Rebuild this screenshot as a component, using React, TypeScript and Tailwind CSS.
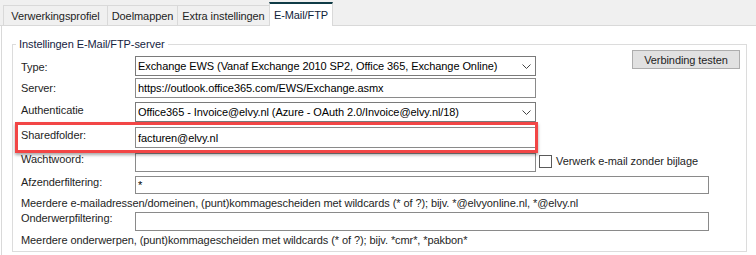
const tabs = [
  { label: 'Verwerkingsprofiel', width: 'w-[104px]' },
  { label: 'Doelmappen', width: 'w-[70px]' },
  { label: 'Extra instellingen', width: 'w-[92px]' },
];

function Chevron() {
  return (
    <svg width="9" height="5" viewBox="0 0 9 5" className="shrink-0">
      <path d="M0.5 0.5 L4.5 4.5 L8.5 0.5" fill="none" stroke="#444" strokeWidth="1" />
    </svg>
  );
}

function SelectBox({ value }: { value: string }) {
  return (
    <div className="w-[401px] h-[20px] border border-[#7a7a7a] bg-white flex items-center pl-[2px] pr-[4px] text-black">
      <span className="flex-1 whitespace-nowrap overflow-hidden">{value}</span>
      <Chevron />
    </div>
  );
}

function TextBox({ value, className }: { value?: string; className: string }) {
  return (
    <div className={`border border-[#8a8a8a] bg-white flex items-center pl-[2px] text-black whitespace-nowrap ${className}`}>
      {value}
    </div>
  );
}

export default function App() {
  return (
    <div className="w-[756px] h-[255px] bg-white overflow-hidden font-['Liberation_Sans',Arial,sans-serif] text-[11px] leading-[14px] tracking-[-0.08px] text-[#1e1e1e]">
      {/* Tabs */}
      <div className="h-[26px] bg-[#f0f0f0] border-b border-[#d9d9d9] flex items-end pl-[3px]">
        {tabs.map((tab) => (
          <div
            key={tab.label}
            className={`${tab.width} h-[20px] border-l border-t border-[#d9d9d9] bg-[#f0f0f0] flex items-center justify-center pt-[1px] whitespace-nowrap`}
          >
            {tab.label}
          </div>
        ))}
        <div className="w-[64px] h-[24px] -mb-px relative border-t-2 border-t-[#0f3b46] border-x border-x-[#d9d9d9] bg-white flex justify-center pt-[4px] text-[#10243a] whitespace-nowrap">
          E-Mail/FTP
        </div>
      </div>

      {/* Panel */}
      <div className="h-[229px] ml-px border-l border-[#d9d9d9] pt-[18px] pl-[10px]">
        <div className="relative w-[735px] h-[208px] border border-[#dcdcdc] pt-[5px] pl-[8px] pr-[6px]">
          <span className="absolute left-[3px] top-[-8px] bg-white px-[3px] text-[#16233f] whitespace-nowrap">
            Instellingen E-Mail/FTP-server
          </span>

          <div className="flex">
            <div className="flex flex-col pt-[6px]">
              <div className="flex items-start h-[20px]">
                <span className="w-[114px] shrink-0 mt-[4px]">Type:</span>
                <SelectBox value="Exchange EWS (Vanaf Exchange 2010 SP2, Office 365, Exchange Online)" />
              </div>
              <div className="flex items-start h-[20px] mt-[2px]">
                <span className="w-[114px] shrink-0 mt-[3px]">Server:</span>
                <TextBox className="w-[401px] h-[20px]" value="https://outlook.office365.com/EWS/Exchange.asmx" />
              </div>
              <div className="flex items-start h-[20px] mt-[4px]">
                <span className="w-[114px] shrink-0 mt-px">Authenticatie</span>
                <SelectBox value="Office365 - Invoice@elvy.nl (Azure - OAuth 2.0/Invoice@elvy.nl/18)" />
              </div>
            </div>
            <button className="ml-auto w-[108px] h-[19px] bg-[#e1e1e1] border border-[#adadad] text-[#1e1e1e] leading-[14px]">
              Verbinding testen
            </button>
          </div>

          <div className="relative flex items-start h-[21px] mt-[5px]">
            <span className="w-[114px] shrink-0 mt-px">Sharedfolder:</span>
            <TextBox className="w-[401px] h-[21px]" value="facturen@elvy.nl" />
            <div className="absolute left-[-6px] top-[-5px] w-[523px] h-[31px] border-[3px] border-[#f24646] shadow-[0_2px_3px_rgba(0,0,0,0.35)] pointer-events-none" />
          </div>

          <div className="flex items-start h-[19px] mt-[5px]">
            <span className="w-[114px] shrink-0 -mt-px">Wachtwoord:</span>
            <TextBox className="w-[401px] h-[19px]" />
            <div className="w-[13px] h-[13px] border border-[#5a5a5a] bg-white ml-[3px] mt-[2px] shrink-0" />
            <span className="ml-[4px] mt-[1px] whitespace-nowrap">Verwerk e-mail zonder bijlage</span>
          </div>

          <div className="flex items-start h-[18px] mt-[4px]">
            <span className="w-[114px] shrink-0 -mt-px">Afzenderfiltering:</span>
            <TextBox className="w-[574px] h-[18px]" value="*" />
          </div>
          <p className="mt-[2px] h-[14px] whitespace-nowrap">
            Meerdere e-mailadressen/domeinen, (punt)kommagescheiden met wildcards (* of ?); bijv. *@elvyonline.nl, *@elvy.nl
          </p>

          <div className="flex items-start h-[19px] mt-[2px]">
            <span className="w-[114px] shrink-0 -mt-px">Onderwerpfiltering:</span>
            <TextBox className="w-[574px] h-[19px]" />
          </div>
          <p className="mt-[2px] h-[14px] whitespace-nowrap">
            Meerdere onderwerpen, (punt)kommagescheiden met wildcards (* of ?); bijv. *cmr*, *pakbon*
          </p>
        </div>
      </div>
    </div>
  );
}
